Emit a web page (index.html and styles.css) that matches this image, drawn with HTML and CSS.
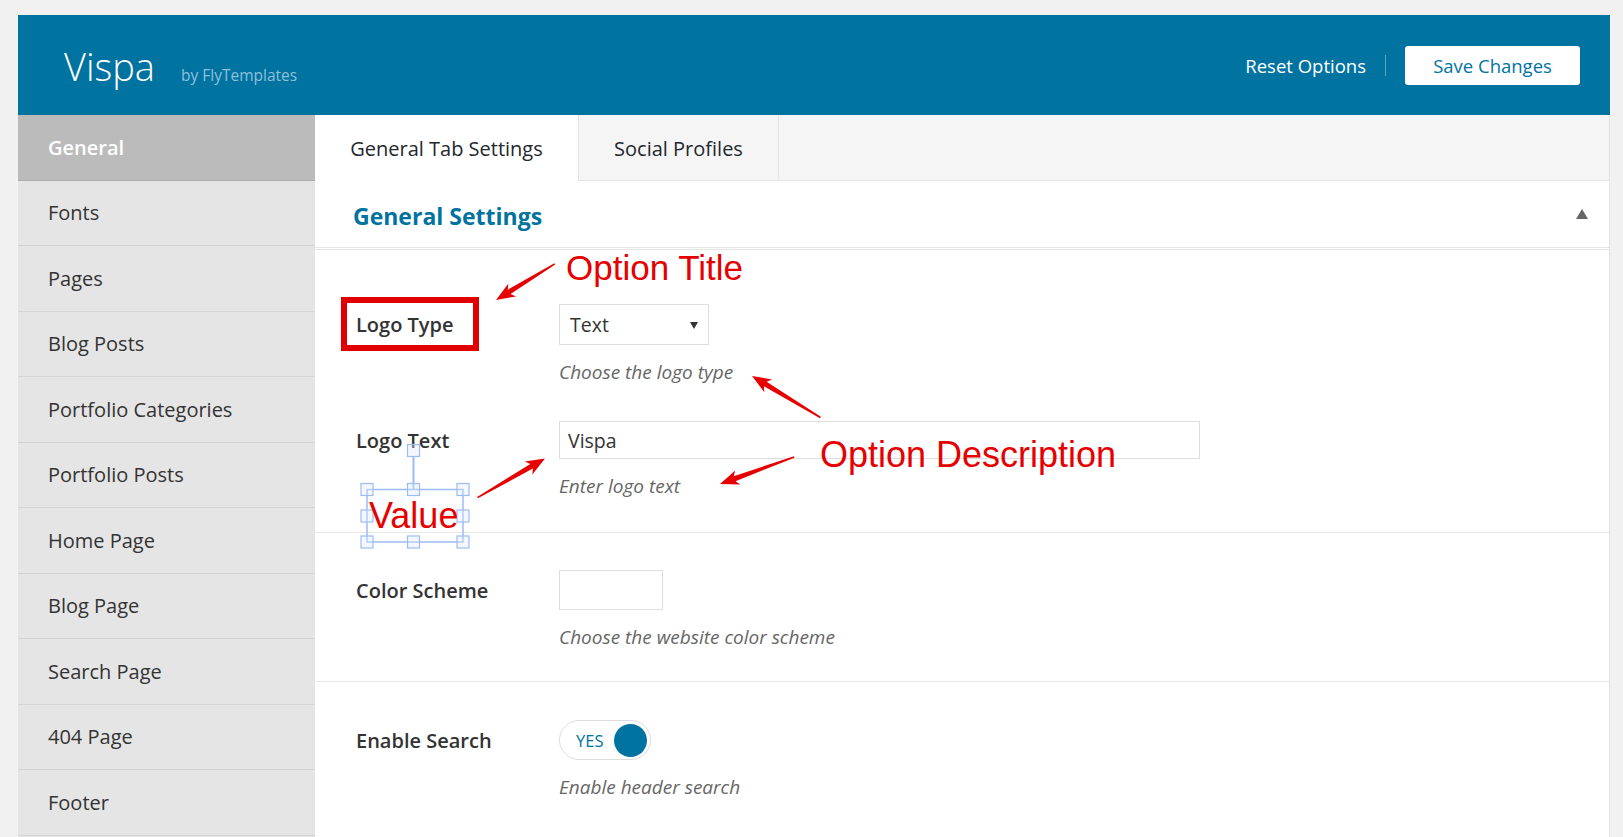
FILE: index.html
```html
<!DOCTYPE html>
<html lang="en">
<head>
<meta charset="utf-8">
<title>Vispa Options</title>
<link rel="stylesheet" href="styles.css">
</head>
<body>
<div class="page">
  <header class="topbar">
    <div class="brand">
      <span class="brand-name">Vispa</span>
      <span class="brand-by">by FlyTemplates</span>
    </div>
    <div class="actions">
      <a class="reset" href="#">Reset Options</a>
      <span class="sep"></span>
      <button class="save" type="button">Save Changes</button>
    </div>
  </header>
  <div class="main">
    <nav class="sidebar">
      <ul>
        <li class="active">General</li>
        <li>Fonts</li>
        <li>Pages</li>
        <li>Blog Posts</li>
        <li>Portfolio Categories</li>
        <li>Portfolio Posts</li>
        <li>Home Page</li>
        <li>Blog Page</li>
        <li>Search Page</li>
        <li>404 Page</li>
        <li>Footer</li>
      </ul>
    </nav>
    <section class="content">
      <div class="tabs">
        <div class="tab tab-general active">General Tab Settings</div>
        <div class="tab tab-social">Social Profiles</div>
      </div>
      <div class="section-head">
        <h2>General Settings</h2>
        <span class="collapse-arrow"></span>
      </div>
      <div class="group group-first">
        <div class="option">
          <div class="opt-label">Logo Type</div>
          <div class="opt-field">
            <div class="select"><span>Text</span><span class="caret"></span></div>
          </div>
          <div class="opt-desc">Choose the logo type</div>
        </div>
        <div class="option">
          <div class="opt-label">Logo Text</div>
          <div class="opt-field">
            <input class="text-input" type="text" value="Vispa">
          </div>
          <div class="opt-desc">Enter logo text</div>
        </div>
      </div>
      <div class="group group-mid">
        <div class="option">
          <div class="opt-label">Color Scheme</div>
          <div class="opt-field">
            <div class="color-box"></div>
          </div>
          <div class="opt-desc">Choose the website color scheme</div>
        </div>
      </div>
      <div class="group group-last">
        <div class="option">
          <div class="opt-label">Enable Search</div>
          <div class="opt-field">
            <div class="switch"><span class="switch-text">YES</span><span class="knob"></span></div>
          </div>
          <div class="opt-desc">Enable header search</div>
        </div>
      </div>
    </section>
  </div>
</div>

<div class="annotations">
  <svg class="anno-svg" width="1623" height="837" viewBox="0 0 1623 837" xmlns="http://www.w3.org/2000/svg">
    <g fill="#e60000">
      <polygon transform="translate(496 300) rotate(148.4)" points="0,0 -19,-7.5 -15.5,-2.6 -69,-0.8 -69,0.8 -15.5,2.6 -19,7.5"/>
      <polygon transform="translate(752 376) rotate(-148.8)" points="0,0 -19,-7.5 -15.5,-2.6 -80,-0.8 -80,0.8 -15.5,2.6 -19,7.5"/>
      <polygon transform="translate(545 458.5) rotate(-30.1)" points="0,0 -19,-7.5 -15.5,-2.6 -78,-0.8 -78,0.8 -15.5,2.6 -19,7.5"/>
      <polygon transform="translate(720 484) rotate(160)" points="0,0 -19,-7.5 -15.5,-2.6 -79,-0.8 -79,0.8 -15.5,2.6 -19,7.5"/>
    </g>
    <g fill="none" stroke="#9dbcf6">
      <line x1="413.5" y1="456.5" x2="413.5" y2="489" stroke-width="2"/>
      <rect x="367" y="489.5" width="96" height="52.5" stroke-width="1.5"/>
      <g stroke-width="1.2" fill="rgba(220,232,255,0.35)">
        <rect x="407.5" y="444.5" width="12" height="12"/>
        <rect x="361" y="483.5" width="12" height="12"/>
        <rect x="407.5" y="483.5" width="12" height="12"/>
        <rect x="457" y="483.5" width="12" height="12"/>
        <rect x="361" y="510" width="12" height="12"/>
        <rect x="457" y="510" width="12" height="12"/>
        <rect x="361" y="536" width="12" height="12"/>
        <rect x="407.5" y="536" width="12" height="12"/>
        <rect x="457" y="536" width="12" height="12"/>
      </g>
    </g>
  </svg>
  <div class="red-box"></div>
  <div class="note note-title">Option Title</div>
  <div class="note note-desc">Option Description</div>
  <div class="note note-value">Value</div>
</div>
</body>
</html>
```

FILE: styles.css
```css
html, body {
  margin: 0;
  padding: 0;
  height: 100%;
  overflow: hidden;
}

body {
  position: relative;
  background: #f1f1f1;
  font-family: "Open Sans", "Noto Sans", sans-serif;
  color: #333;
}

.page {
  margin: 15px 13px 0 18px;
  height: calc(100% - 15px);
  display: flex;
  flex-direction: column;
}

/* ---------- top bar ---------- */
.topbar {
  flex: none;
  height: 100px;
  background: #0073a1;
  display: flex;
  align-items: center;
  justify-content: space-between;
  padding: 0 30px 0 46px;
}

.brand {
  display: flex;
  align-items: baseline;
  gap: 26px;
  padding-top: 3px;
}

.brand-name {
  font-size: 38px;
  font-weight: 300;
  line-height: 1;
  color: #fff;
}

.brand-by {
  font-size: 15.5px;
  color: #8fc0da;
}

.actions {
  display: flex;
  align-items: center;
}

.reset {
  color: #fff;
  text-decoration: none;
  font-size: 18.5px;
}

.sep {
  width: 1px;
  height: 21px;
  background: #5fa5c8;
  margin: 0 19px;
}

.save {
  width: 175px;
  height: 39px;
  border: none;
  border-radius: 3px;
  background: #fff;
  color: #0073a1;
  font-family: inherit;
  font-size: 18.5px;
  padding: 0;
}

/* ---------- main ---------- */
.main {
  flex: 1;
  display: flex;
  min-height: 0;
}

.sidebar {
  flex: none;
  width: 297px;
  background: #e5e5e5;
}

.sidebar ul {
  list-style: none;
  margin: 0;
  padding: 0;
}

.sidebar li {
  height: 64.5px;
  border-bottom: 1px solid #d4d4d4;
  display: flex;
  align-items: center;
  padding-left: 30px;
  font-size: 20px;
  color: #333;
}

.sidebar li.active {
  background: #bbbbbb;
  color: #fff;
  font-weight: 600;
  border-bottom-color: #adadad;
}

.content {
  flex: 1;
  background: #fff;
  border-right: 1px solid #e2e2e2;
}

/* ---------- tabs ---------- */
.tabs {
  display: flex;
  height: 65px;
  background: #f5f5f5;
  border-bottom: 1px solid #e5e5e5;
}

.tab {
  box-sizing: border-box;
  display: flex;
  align-items: center;
  justify-content: center;
  padding-top: 1px;
  font-size: 20px;
  color: #23282d;
}

.tab-general {
  width: 263px;
}

.tab-social {
  width: 201px;
  border-left: 1px solid #e5e5e5;
  border-right: 1px solid #e5e5e5;
}

.tab.active {
  background: #fff;
  margin-bottom: -1px;
}

/* ---------- section head ---------- */
.section-head {
  height: 62px;
  padding: 4px 21px 0 38px;
  display: flex;
  align-items: center;
  justify-content: space-between;
  border-bottom: 3px double #e5e5e5;
}

.section-head h2 {
  margin: 0;
  font-size: 23px;
  font-weight: 700;
  color: #0073a1;
}

.collapse-arrow {
  width: 0;
  height: 0;
  border-left: 6px solid transparent;
  border-right: 6px solid transparent;
  border-bottom: 10px solid #666;
  margin-top: -4px;
}

/* ---------- options ---------- */
.group {
  border-bottom: 1px solid #e8e8e8;
}

.group-first {
  padding: 16px 0 35px;
}

.group-mid {
  padding-bottom: 33px;
}

.group-mid .option {
  padding-top: 37px;
}

.group-last {
  border-bottom: none;
}

.option {
  display: grid;
  grid-template-columns: 203px 1fr;
  grid-template-areas:
    "label field"
    ".     desc";
  align-items: center;
  padding: 38px 0 0 41px;
}

.opt-label {
  grid-area: label;
  font-size: 20px;
  font-weight: 600;
  color: #333;
}

.opt-field {
  grid-area: field;
  display: flex;
}

.opt-desc {
  grid-area: desc;
  margin-top: 16px;
  font-size: 19px;
  line-height: 22px;
  font-style: italic;
  color: #666;
}

.select {
  box-sizing: border-box;
  width: 150px;
  height: 41px;
  border: 1px solid #dddddd;
  display: flex;
  align-items: center;
  justify-content: space-between;
  padding: 0 10px 0 10px;
  font-size: 19.5px;
  color: #333;
}

.caret {
  width: 0;
  height: 0;
  border-left: 4px solid transparent;
  border-right: 4px solid transparent;
  border-top: 7px solid #333;
  margin-top: 2px;
}

.text-input {
  box-sizing: border-box;
  width: 641px;
  height: 38px;
  border: 1px solid #dddddd;
  border-radius: 0;
  padding: 0 8px;
  margin: 0;
  font-family: inherit;
  font-size: 19.5px;
  color: #333;
  background: #fff;
  outline: none;
}

.color-box {
  box-sizing: border-box;
  width: 104px;
  height: 40px;
  border: 1px solid #dddddd;
  background: #fff;
}

.switch {
  box-sizing: border-box;
  width: 92px;
  height: 40px;
  border: 1px solid #dddddd;
  border-radius: 20px;
  display: flex;
  align-items: center;
  justify-content: space-between;
  padding: 0 3px 0 16px;
}

.switch-text {
  font-size: 16.5px;
  color: #0073a1;
}

.knob {
  width: 33px;
  height: 33px;
  border-radius: 50%;
  background: #0073a1;
}

/* ---------- annotations (overlay) ---------- */
.annotations {
  position: absolute;
  top: 0;
  left: 0;
  width: 1623px;
  height: 837px;
  pointer-events: none;
}

.anno-svg {
  position: absolute;
  top: 0;
  left: 0;
}

.red-box {
  position: absolute;
  left: 341px;
  top: 297px;
  width: 138px;
  height: 54px;
  box-sizing: border-box;
  border: 6px solid #e10000;
}

.note {
  position: absolute;
  font-family: "Liberation Sans", Arial, sans-serif;
  font-size: 35px;
  line-height: 35px;
  color: #e60000;
  white-space: nowrap;
}

.note-title {
  left: 566px;
  top: 250px;
}

.note-desc {
  left: 820px;
  top: 437px;
  font-size: 36px;
  line-height: 36px;
}

.note-value {
  left: 369px;
  top: 498px;
  font-size: 36px;
  line-height: 36px;
}
```
